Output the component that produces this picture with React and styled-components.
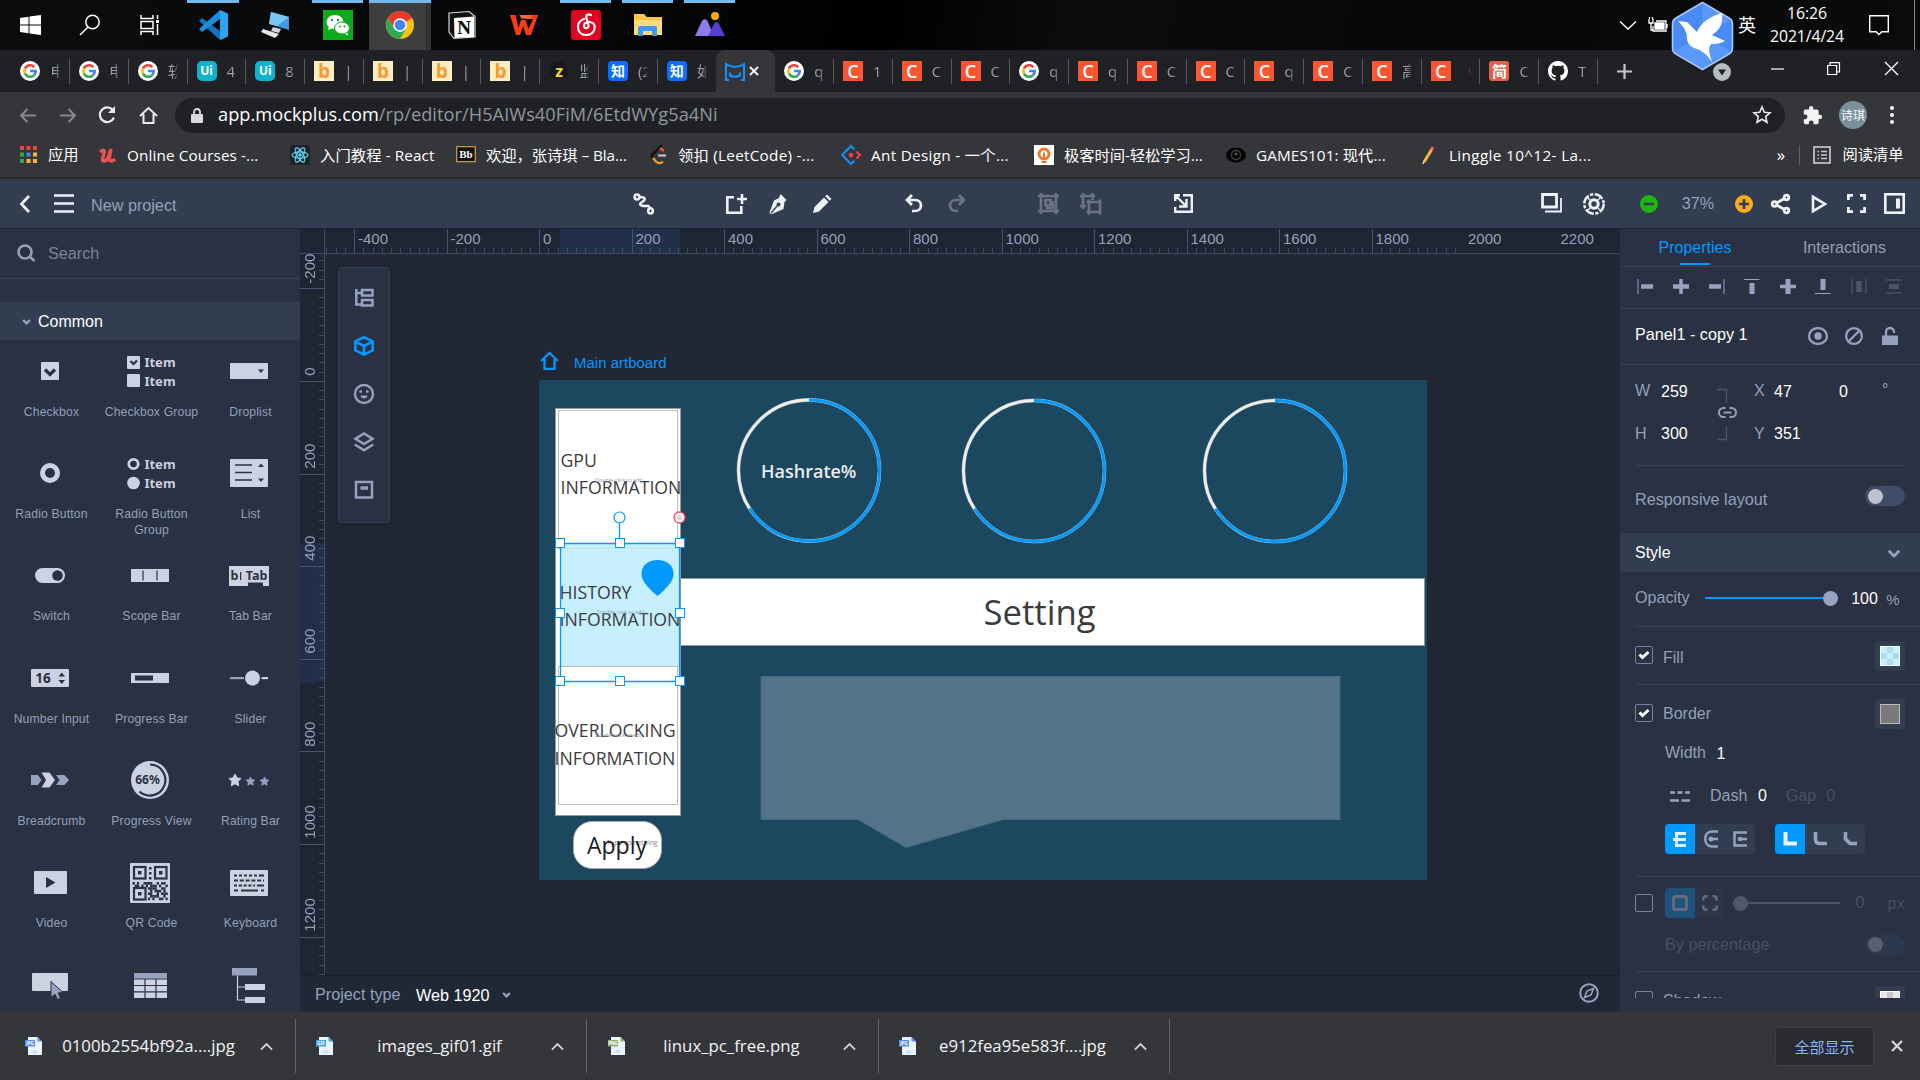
import React from "react";
import styled, { createGlobalStyle, css } from "styled-components";

const UI = '"Open Sans", "Noto Sans CJK SC", sans-serif';
const ARIAL = '"Liberation Sans", "Noto Sans CJK SC", sans-serif';

const C = {
  panel: "#293142",
  panelHi: "#323d50",
  line: "#35435a",
  canvas: "#222734",
  ruler: "#1e2533",
  mute: "#94a0ba",
  light: "#ccd2e1",
  mid: "#97a2c0",
  blue: "#0099ff",
  board: "#1b475f",
};

const Global = createGlobalStyle`
  html, body { margin: 0; padding: 0; background: #222734; }
  *, *::before, *::after { box-sizing: border-box; }
  svg { display: block; flex: none; overflow: visible; }
`;

const Screen = styled.div`
  position: relative;
  width: 1920px;
  height: 1080px;
  overflow: hidden;
  display: flex;
  flex-direction: column;
  font-family: ${UI};
`;

const Slot = styled.div`
  flex: none;
  width: ${(p) => p.$w || 24}px;
  margin-left: ${(p) => p.$ml || 0}px;
  margin-top: ${(p) => p.$mt || 0}px;
  margin-bottom: ${(p) => p.$mb || 0}px;
  display: flex;
  align-items: center;
  justify-content: ${(p) => p.$j || "center"};
  color: ${(p) => p.$c || "inherit"};
  opacity: ${(p) => (p.$dim ? 0.3 : 1)};
`;

const Txt = styled.span`
  white-space: nowrap;
  font-size: ${(p) => p.$s || 15}px;
  letter-spacing: ${(p) => p.$ls || 0}px;
  color: ${(p) => p.$c || "inherit"};
  line-height: 1;
`;

const Ico = ({ w = 24, h, vb, sw = 2, children, fill = "none", stroke = "currentColor" }) => (
  <svg width={w} height={h || w} viewBox={vb || `0 0 ${w} ${h || w}`} fill={fill} stroke={stroke} strokeWidth={sw}>
    {children}
  </svg>
);

/* ---------- Windows task bar ---------- */

const TaskBar = styled.div`
  height: 50px;
  flex: none;
  display: flex;
  align-items: stretch;
  color: #fff;
  background: linear-gradient(100deg, #0b0c0e 0%, #060708 30%, #000 46%, #0b0c0d 56%, #060707 75%, #0a0b0c 100%);
`;
const TaskCell = styled.div`
  position: relative;
  flex: none;
  width: ${(p) => p.$w || 62}px;
  display: flex;
  align-items: center;
  justify-content: center;
  background: ${(p) => (p.$active ? "linear-gradient(90deg, #3d3e40 92%, #26272a 93%, #333436 94%)" : "none")};
  ${(p) =>
    p.$bar &&
    css`
      &::before {
        content: "";
        position: absolute;
        top: 0;
        left: ${p.$active ? 0 : 5}px;
        right: ${p.$active ? 0 : 6}px;
        height: 3px;
        background: #76b9ed;
      }
    `}
`;
const TaskTray = styled.div`
  margin-left: auto;
  display: flex;
  align-items: stretch;
`;
const Clock = styled.div`
  width: 90px;
  margin-left: 3px;
  text-align: center;
  font-size: 15.8px;
  line-height: 23px;
  padding-top: 2px;
  letter-spacing: -0.1px;
`;
const TrayEdge = styled.div`
  width: 1px;
  margin: 0 5px 0 23px;
  background: #8a8a8a;
`;
const BirdBadge = styled.div`
  position: absolute;
  left: 1671px;
  top: 1px;
`;

const Windows = () => (
  <Ico w={21} h={20} vb="0 0 21 20" fill="#fff" stroke="none">
    <path d="M0 3l8.5-1.2v7.7H0zM9.5 1.6L21 0v9.5H9.5zM0 10.5h8.5v7.7L0 17zM9.5 10.5H21V20L9.5 18.4z" />
  </Ico>
);
const SearchGlyph = () => (
  <Ico w={22} sw={1.5}>
    <circle cx="13.5" cy="8" r="6.7" />
    <path d="M9 13L1 21" />
  </Ico>
);
const TaskView = () => (
  <Ico w={22} h={20} sw={1.5}>
    <path d="M2 0v3.5h12V0M2 20v-3.5h12V20M2 6.500h12v7H2zM18.500 0v4M18.500 9v11" />
    <path d="M17 6.500h3" strokeWidth="3" />
  </Ico>
);
const VsCode = () => (
  <Ico w={30} stroke="none">
    <path d="M22 30L1 11l3-3 18 13z" fill="#1473bd" />
    <path d="M22 0L1 19l3 3 18-13z" fill="#1b8edb" />
    <path d="M22 0l8 3.500v23L22 30z" fill="#2aa5ee" />
  </Ico>
);
const RemotePc = () => (
  <Ico w={30} h={26} stroke="none">
    <path d="M10 0l18 5v13L8 12z" fill="#3c9be0" />
    <path d="M10 0l18 5-12 9-8-2z" fill="#7cc6f4" />
    <path d="M12 15l8 2-2 4-8-2z" fill="#cfd4d8" />
    <path d="M2 17l16 5-4 4L0 20z" fill="#e6e9eb" />
  </Ico>
);
const WeChat = () => (
  <Ico w={30} stroke="none">
    <rect width="30" height="30" fill="#0cab1c" />
    <ellipse cx="12" cy="12" rx="8.5" ry="7" fill="#fff" />
    <path d="M6 16l-1 4 5-2zM24 22l1 3.500-4-2z" fill="#fff" />
    <ellipse cx="19" cy="18" rx="7.500" ry="6" fill="#fff" stroke="#0cab1c" strokeWidth="1" />
    <g fill="#0cab1c">
      <circle cx="9" cy="10" r="1.200" /><circle cx="15" cy="10" r="1.200" />
      <circle cx="17" cy="16.500" r="1" /><circle cx="21.500" cy="16.500" r="1" />
    </g>
  </Ico>
);
const Chrome = () => (
  <Ico w={28} stroke="none">
    <circle cx="14" cy="14" r="14" fill="#fbc116" />
    <path d="M14 14L1.900 7A14 14 0 0 1 26.100 7z" fill="#e33b2e" />
    <path d="M14 7h12.100A14 14 0 0 0 1.900 7L8 17z" fill="#e33b2e" />
    <path d="M1.900 7A14 14 0 0 0 14 28l6-10.500-6 3.500-6-3.500z" fill="#2da94f" />
    <circle cx="14" cy="14" r="6.800" fill="#fff" />
    <circle cx="14" cy="14" r="5.300" fill="#4285f4" />
  </Ico>
);
const GlyphText = styled.text`
  font-family: ${(p) => p.$f || '"Noto Sans"'};
  font-size: ${(p) => p.$s}px;
  font-weight: ${(p) => p.$b || 700};
  text-anchor: middle;
`;
const Notion = () => (
  <Ico w={28} stroke="none">
    <path d="M1 2L21 0.500l6 5V26L6 27.500 1 21z" fill="#111" stroke="#d8d8d8" strokeWidth="1.200" />
    <path d="M6 7l20-1.500V26L6.500 27z" fill="#fff" />
    <GlyphText $f='"Liberation Serif"' $s={19} x="16" y="23" fill="#000">N</GlyphText>
  </Ico>
);
const Wps = () => (
  <Ico w={28} h={20} stroke="none" fill="#ff3b14">
    <path d="M0 0h5.500l3 13 2.500-8h4.500l3 9L23 4h-8l1-4h12l-7 20h-5l-3-9-3 9H6z" />
    <path d="M10 0h12l-1.500 3.500H11z" fill="#ff6a3c" />
  </Ico>
);
const NetEase = () => (
  <Ico w={30}>
    <rect width="30" height="30" rx="3" fill="#e60020" stroke="none" />
    <path
      d="M20 5c-3-1.500-5.500 0-4.500 3l2 7.500c.7 3-4.500 4-4.500.5 0-3 3-4 5.500-4 4 0 6 3.500 5 7-1 4-4.500 6-8.500 6C10 25 7 21.500 7 17c0-4.500 3-7 6-8"
      stroke="#fff" strokeWidth="2.200" strokeLinecap="round"
    />
  </Ico>
);
const Folder = () => (
  <Ico w={28} h={24} stroke="none">
    <path d="M0 1h10l3 3h15v18H0z" fill="#f7c64a" />
    <path d="M0 7h28v15H0z" fill="#ffdc78" />
    <path d="M4 23v-8a2 2 0 0 1 2-2h15a2 2 0 0 1 2 2v8h-5v-5H9v5z" fill="#3f9be4" />
  </Ico>
);
const Peaks = () => (
  <Ico w={30} h={22} stroke="none">
    <path d="M0 22L7 7c1.500-2.500 4-2.500 5.500 0L19 22z" fill="#8e7cf0" />
    <path d="M13 22l6-12c1.500-2.500 3.500-2.500 5 0l6 12z" fill="#5a3fd6" />
    <circle cx="20" cy="2" r="4" fill="#ffb000" />
  </Ico>
);
const Bird = () => (
  <Ico w={63} h={70} stroke="none">
    <path d="M31.500 1.500L58 17q3.500 2 3.500 6v24q0 4-3.500 6L31.500 68.500 5 53q-3.500-2-3.500-6V23q0-4 3.500-6z" fill="#4a8af4" stroke="#a6c8ff" strokeWidth="1.600" />
    <path d="M31.500 3L60 19 31.500 35z" fill="#69a2ff" opacity=".6" />
    <path d="M3 50L31.500 35 60 50 31.500 67z" fill="#5b98fb" />
    <path d="M7 20l9 1 10 10C29 22 40 15 51 12c1 8-1 14-5 18l-5 4 13 6c-5 3-10 3-14 3-3 4-2 8 1 18-5-7-9-11-15-13-8-2-11-8-10-13-1-6-5-11-9-15z" fill="#fff" />
  </Ico>
);

/* ---------- Browser chrome ---------- */

const TabStrip = styled.div`
  height: 42px;
  flex: none;
  display: flex;
  align-items: stretch;
  padding-left: 11.3px;
  background: #202124;
  color: #9aa0a6;
`;
const Tab = styled.div`
  flex: none;
  width: 58.77px;
  display: flex;
  align-items: center;
  padding-left: 9px;
  gap: 10px;
  background: linear-gradient(#55575b, #55575b) right 9px / 1px 25px no-repeat;
  ${(p) =>
    p.$bare &&
    css`
      background: none;
    `}
`;
const ActiveTab = styled(Tab)`
  background: #35363a;
  border-radius: 9px 9px 0 0;
  gap: 3px;
  color: #fff;
`;
const TabLabel = styled.div`
  width: 10px;
  overflow: hidden;
  white-space: nowrap;
  font-size: 15px;
  line-height: 22px;
  mask-image: linear-gradient(90deg, #000 60%, transparent);
`;
const Favicon = styled.div`
  flex: none;
  width: 20px;
  height: 20px;
  border-radius: ${(p) => p.$r || 0}px;
  background: ${(p) => p.$bg || "none"};
  color: ${(p) => p.$c || "#fff"};
  display: flex;
  align-items: center;
  justify-content: center;
  font-size: ${(p) => p.$s || 15}px;
  font-weight: ${(p) => p.$b || 700};
  line-height: 1;
`;
const Google = () => (
  <Ico w={20} stroke="none">
    <circle cx="10" cy="10" r="10" fill="#fff" />
    <g fill="none" strokeWidth="2.600">
      <path d="M14.300 6.200A5.700 5.700 0 0 0 5 7.300" stroke="#ea4335" />
      <path d="M5 7.300a5.700 5.700 0 0 0 0 5.400" stroke="#fbbc05" />
      <path d="M5 12.700a5.700 5.700 0 0 0 8.800 1.700" stroke="#34a853" />
      <path d="M13.800 14.400A5.700 5.700 0 0 0 15.700 10H10" stroke="#4285f4" />
    </g>
  </Ico>
);
const favs = {
  g: <Google />,
  u: <Favicon $bg="#10b3cf" $r={5} $s={12}>Ui</Favicon>,
  b: <Favicon $bg="#fdeec2" $c="#f79a35" $s={19}>b</Favicon>,
  z: <Favicon $bg="radial-gradient(#17181b 55%, transparent 75%)" $c="#ffd91a" $s={16}>z</Favicon>,
  zh: <Favicon $bg="#0b6dff" $r={4} $s={14}>知</Favicon>,
  c: <Favicon $bg="#fc5531" $s={18} $b={600}>C</Favicon>,
  j: <Favicon $bg="#e2604b" $r={3} $s={15}>简</Favicon>,
  gh: (
    <Ico w={20} vb="0 0 16 16" fill="#fff" stroke="none">
      <path d="M8 0C3.580 0 0 3.580 0 8c0 3.540 2.290 6.530 5.470 7.590.4.070.55-.17.55-.38v-1.330c-2.230.48-2.700-1.070-2.700-1.070-.36-.92-.89-1.170-.89-1.170-.73-.5.050-.49.050-.49.8.060 1.230.83 1.230.83.72 1.220 1.870.87 2.330.66.070-.52.28-.87.510-1.070-1.780-.2-3.640-.89-3.640-3.950 0-.87.31-1.590.82-2.150-.08-.2-.36-1.020.08-2.120 0 0 .67-.21 2.200.82a7.600 7.600 0 0 1 4 0c1.530-1.040 2.200-.82 2.200-.82.44 1.100.16 1.920.08 2.120.51.56.82 1.270.82 2.150 0 3.070-1.870 3.750-3.650 3.950.29.25.54.73.54 1.480v2.200c0 .21.15.46.55.38A8 8 0 0 0 16 8c0-4.420-3.580-8-8-8z" />
    </Ico>
  ),
};
const tabsLeft = [
  ["g", "电"], ["g", "电"], ["g", "软"], ["u", "4"], ["u", "8"], ["b", " |"], ["b", " |"], ["b", " |"], ["b", " |"],
  ["z", "监"], ["zh", "(2"], ["zh", "如"],
];
const tabsRight = [
  ["g", "q"], ["c", "1"], ["c", "C"], ["c", "C"], ["g", "q"], ["c", "q"], ["c", "C"], ["c", "C"], ["c", "q"], ["c", "C"],
  ["c", "高"], ["c", "《"], ["j", "C"], ["gh", "T"],
];

const AddressRow = styled.div`
  height: 46px;
  flex: none;
  display: flex;
  align-items: center;
  background: #35363a;
  color: #e8eaed;
`;
const UrlPill = styled.div`
  width: 1610px;
  height: 35px;
  margin-left: 15px;
  border-radius: 18px;
  background: #202124;
  display: flex;
  align-items: center;
  padding: 0 11px 0 10px;
`;
const Url = styled.div`
  margin-left: 9px;
  padding-bottom: 2px;
  flex: 1;
  white-space: nowrap;
  color: #93979c;
  font-size: 18.2px;
  letter-spacing: ${(p) => p.$ls || 0.05}px;
  b { color: #fff; font-weight: 400; }
`;
const Avatar = styled.div`
  width: 28px;
  height: 28px;
  margin-left: 15px;
  border-radius: 50%;
  background: #78909c;
  color: #fff;
  font-size: 12px;
  display: flex;
  align-items: center;
  justify-content: center;
`;

const BookmarkRow = styled.div`
  height: 41px;
  flex: none;
  display: flex;
  align-items: center;
  padding-bottom: 6px;
  background: #35363a;
  border-bottom: 2px solid #292929;
  color: #fff;
`;
const Mark = styled.div`
  flex: none;
  display: flex;
  align-items: center;
  width: ${(p) => p.$w}px;
  gap: ${(p) => p.$g || 10}px;
  white-space: nowrap;
  font-size: 15.3px;
  line-height: 22px;
  letter-spacing: ${(p) => p.$ls ?? 0.1}px;
`;
const MarkSep = styled.div`
  width: 1px;
  height: 20px;
  background: #5f6368;
`;

/* ---------- Editor header ---------- */

const EditorHeader = styled.div`
  height: 50px;
  flex: none;
  display: flex;
  align-items: center;
  padding-left: 14px;
  background: ${C.panelHi};
  border-bottom: 1px solid #1d2430;
  color: #eef1f6;
  font-family: ${ARIAL};
`;
const ZoomDot = styled.div`
  width: 18px;
  height: 18px;
  border-radius: 50%;
  background: ${(p) => p.$bg};
  color: #323d50;
  display: flex;
  align-items: center;
  justify-content: center;
`;

/* ---------- Editor body ---------- */

const Body = styled.div`
  flex: 1;
  min-height: 0;
  display: flex;
  font-family: ${ARIAL};
`;
const LeftPanel = styled.div`
  width: 300px;
  flex: none;
  overflow: hidden;
  background: ${C.panel};
`;
const SearchRow = styled.div`
  height: 50px;
  display: flex;
  align-items: center;
  padding: 0 0 1px 17px;
  gap: 13px;
  border-bottom: 1px solid ${C.line};
  color: #78849c;
`;
const GroupHead = styled.div`
  height: 38px;
  margin-top: 23px;
  display: flex;
  align-items: center;
  gap: 8px;
  padding: 1px 0 0 22px;
  background: ${C.panelHi};
  color: #fff;
`;
const Palette = styled.div`
  display: grid;
  grid-template-columns: repeat(3, 100px);
  grid-auto-rows: 102.35px;
`;
const PaletteItem = styled.div`
  display: flex;
  flex-direction: column;
  align-items: center;
  &:nth-child(3n) { padding-right: 2px; }
`;
const PaletteArt = styled.div`
  height: 62px;
  flex: none;
  display: flex;
  align-items: center;
  justify-content: center;
`;
const PaletteLabel = styled.div`
  width: 96px;
  margin-left: 3px;
  margin-top: 1.6px;
  text-align: center;
  font-size: 12.2px;
  line-height: 16px;
  color: ${C.mute};
  letter-spacing: 0.15px;
`;

const L = C.light, D = C.panel, M = C.mid;
const itemText = (y) => <GlyphText $s={13} x="33" y={y} fill={L}>Item</GlyphText>;
const qrCells = [
  "1010011110010110", "0110101011101001",
  "0000000111100110", "0000000010111010", "0000000110010111", "0000000011110010", "0000000101001101",
];
const palette = [
  ["Checkbox", <Ico w={18} stroke="none"><rect width="18" height="18" rx="1" fill={L} /><path d="M4 7.500l5 5 5-5" stroke={D} strokeWidth="3.200" fill="none" /></Ico>],
  ["Checkbox Group", (
    <Ico w={46} h={32} stroke="none">
      <rect width="13" height="13" rx="1" y="1" fill={L} /><path d="M3.500 6l3 3 3.500-3.500" stroke={D} strokeWidth="2.200" fill="none" />
      <rect width="13" height="13" rx="1" y="19" fill={L} />{itemText(12)}{itemText(30.500)}
    </Ico>
  )],
  ["Droplist", <Ico w={38} h={16} stroke="none"><rect width="38" height="16" rx="1" fill={L} /><path d="M28 6.500h6l-3 3.500z" fill={D} /></Ico>],
  ["Radio Button", <Ico w={20} stroke={L} sw={5}><circle cx="10" cy="10" r="7.500" /></Ico>],
  ["Radio Button Group", (
    <Ico w={46} h={32} stroke="none">
      <circle cx="6.500" cy="7" r="4.700" fill="none" stroke={L} strokeWidth="2.800" /><circle cx="6.500" cy="26" r="6.300" fill={L} />
      {itemText(12)}{itemText(30.500)}
    </Ico>
  )],
  ["List", (
    <Ico w={38} h={28} stroke={D} sw={1.500}>
      <rect width="38" height="28" rx="1" fill={L} stroke="none" /><path d="M5 6h17M5 13.500h17M5 21h17" />
      <path d="M28 8h6l-3-3.500zM28 19.500h6l-3 3.500z" fill={D} stroke="none" />
    </Ico>
  )],
  ["Switch", <Ico w={30} h={15} stroke="none"><rect width="30" height="15" rx="7.500" fill={L} /><circle cx="22.500" cy="7.500" r="5.300" fill={D} /></Ico>],
  ["Scope Bar", <Ico w={38} h={13} stroke={D} sw={1.200}><rect width="38" height="13" fill={L} stroke="none" /><path d="M12 1.500v10M26 1.500v10" /></Ico>],
  ["Tab Bar", (
    <Ico w={40} h={20} stroke="none">
      <path d="M0 0h40v20h-6v-3.500H19V20H0z" fill={L} />
      <GlyphText $s={12.500} x="27.500" y="14" fill={D}>Tab</GlyphText><GlyphText $s={12.500} x="5.500" y="14" fill={D}>b</GlyphText>
      <rect x="11" y="6" width="1.200" height="8" fill={D} />
    </Ico>
  )],
  ["Number Input", (
    <Ico w={38} h={18} stroke="none">
      <rect width="38" height="18" rx="1" fill={L} /><GlyphText $s={13.500} x="12" y="14" fill={D}>16</GlyphText>
      <path d="M27.500 7.500h6.500l-3.200-4zM27.500 11h6.500l-3.200 4z" fill={D} />
    </Ico>
  )],
  ["Progress Bar", <Ico w={38} h={10} stroke="none"><rect width="38" height="10" fill={L} /><rect x="4" y="2.500" width="18" height="5" fill={D} /></Ico>],
  ["Slider", (
    <Ico w={38} h={16} stroke="none">
      <rect y="7" width="14" height="2.200" fill={M} /><circle cx="22.500" cy="8" r="7.500" fill={L} /><rect x="31.500" y="7" width="6.500" height="2.200" fill={L} />
    </Ico>
  )],
  ["Breadcrumb", (
    <Ico w={38} h={16} stroke="none">
      <path d="M0 3h7l3.500 5L7 13H0z" fill={M} /><path d="M10.500 0.500h8L24 8l-5.500 7.500h-8L15 8z" fill={L} /><path d="M25 3h8.500L38 8l-4.500 5H25l3.500-5z" fill={M} />
    </Ico>
  )],
  ["Progress View", (
    <Ico w={38} stroke="none">
      <circle cx="19" cy="19" r="19" fill={L} /><path d="M19 3.500a15.500 15.500 0 1 1-10.500 27" fill="none" stroke={D} strokeWidth="2.200" />
      <GlyphText $s={12} x="16.500" y="23" fill={D}>66%</GlyphText>
    </Ico>
  )],
  ["Rating Bar", (
    <Ico w={40} h={14} stroke="none">
      <path d="M6 1l1.900 3.900 4.100.6-3 3 .7 4.300L6 10.700l-3.700 2.100.7-4.300-3-3 4.100-.6z" fill={L} stroke={L} strokeWidth="1" />
      <path d="M21.500 4l1.300 2.700 3 .4-2.200 2.100.5 3-2.600-1.400-2.700 1.400.5-3-2.200-2.100 3-.4zM35.500 4l1.300 2.700 3 .4-2.200 2.100.5 3-2.600-1.400-2.700 1.400.5-3-2.200-2.100 3-.4z" fill={M} stroke={M} strokeWidth=".8" />
    </Ico>
  )],
  ["Video", <Ico w={33} h={23} stroke="none"><rect width="33" height="23" rx="1" fill={L} /><path d="M12 6v11l9.500-5.500z" fill={D} /></Ico>],
  ["QR Code", (
    <Ico w={40} stroke="none">
      <rect width="40" height="40" rx="1" fill={L} />
      {[[3, 3], [24, 3], [3, 24]].map(([x, y]) => (
        <g key={`${x}-${y}`}>
          <rect x={x + 1} y={y + 1} width="11.500" height="11.500" fill="none" stroke={D} strokeWidth="2.200" />
          <rect x={x + 5} y={y + 5} width="3.500" height="3.500" fill={D} />
        </g>
      ))}
      {[4, 9, 14].map((y) => <rect key={y} x="19" y={y} width="2.500" height="2.500" fill={D} />)}
      {qrCells.map((row, r) =>
        [...row].map((v, i) => v === "1" && <rect key={`${r}-${i}`} x={2.500 + i * 2.200} y={19 + r * 2.600} width="2.300" height="2.600" fill={D} />)
      )}
    </Ico>
  )],
  ["Keyboard", (
    <Ico w={38} h={26} stroke={D} sw={2}>
      <rect width="38" height="26" rx="1" fill={L} stroke="none" />
      <path d="M4 5.500h26" strokeDasharray="3 2" /><path d="M29 5.500h5" /><path d="M4 10.500h30" strokeDasharray="4 1.800" /><path d="M4 15.500h21" strokeDasharray="3 1.800" /><path d="M27 15.500h7M4 20.500h4M11 20.500h17M31 20.500h3" />
    </Ico>
  )],
  ["Button", (
    <Ico w={36} h={26} stroke="none">
      <rect width="36" height="18" y="1" rx="1" fill={L} />
      <path d="M19 9.500v16l4-3.300 2.500 5.300 3-1.500-2.500-5 5-.5z" fill={M} stroke={D} strokeWidth="1" />
    </Ico>
  )],
  ["Table", (
    <Ico w={33} h={25} stroke={D} sw={1.200}>
      <rect width="33" height="25" fill={L} stroke="none" /><rect width="33" height="5.500" fill={M} stroke="none" />
      <path d="M0 6h33M0 12.500h33M0 18.800h33M11 6v19M22 6v19" />
    </Ico>
  )],
  ["Tree", (
    <Ico w={34} h={35} stroke={L} sw={1.200}>
      <rect x="0" y="0" width="25" height="7.500" fill={M} stroke="none" /><path d="M5.500 7.500v24.500H14M5.500 19H14" />
      <rect x="13" y="16" width="20" height="6" fill={L} stroke="none" /><rect x="13" y="29" width="20" height="6" fill={L} stroke="none" />
    </Ico>
  )],
];

const Workspace = styled.div`
  width: 1320px;
  flex: none;
  display: flex;
  flex-direction: column;
`;
const TopRuler = styled.div`
  position: relative;
  height: 25px;
  flex: none;
  display: flex;
  padding-left: 54px;
  overflow: hidden;
  background: linear-gradient(90deg, transparent 260px, #212f49 260px, #212f49 380px, transparent 380px), ${C.ruler};
  border-bottom: 1px solid #3d4c66;
`;
const RulerLabel = styled.div`
  width: 92.5px;
  flex: none;
  padding: 3px 0 0 4px;
  font-size: 15px;
  line-height: 14px;
  color: #96a1b8;
`;
const SideRuler = styled.div`
  position: relative;
  width: 25px;
  flex: none;
  overflow: hidden;
  background: linear-gradient(180deg, transparent 289px, #212f49 289px, #212f49 428px, transparent 428px), ${C.ruler};
  border-right: 1px solid #3d4c66;
`;
const SideLabel = styled.div`
  height: 92.65px;
  margin-top: ${(p) => p.$mt || 0}px;
  padding: 0 0 5px 4px;
  writing-mode: vertical-rl;
  transform: rotate(180deg);
  width: 24px;
  text-align: left;
  display: flex;
  align-items: center;
  font-size: 15px;
  line-height: 14px;
  color: #96a1b8;
`;
const RulerTicks = styled.svg`
  position: absolute;
  inset: 0;
`;
const Middle = styled.div`
  flex: 1;
  min-height: 0;
  display: flex;
`;
const Canvas = styled.div`
  position: relative;
  flex: 1;
  overflow: hidden;
  background: ${C.canvas};
`;
const ToolBox = styled.div`
  position: absolute;
  left: 13px;
  top: 13px;
  width: 52px;
  height: 256px;
  border: 1px solid #354156;
  border-radius: 4px;
  background: ${C.panel};
  color: ${C.mid};
  display: flex;
  flex-direction: column;
  align-items: center;
  padding-top: 19.5px;
  gap: 28.2px;
  box-shadow: 0 0 6px rgba(0, 0, 0, 0.15);
`;
const BoardTitle = styled.div`
  position: absolute;
  left: 216px;
  top: 98px;
  display: flex;
  gap: 16px;
  align-items: center;
  color: ${C.blue};
`;
const Board = styled.div`
  position: absolute;
  left: 214px;
  top: 126px;
  width: 888px;
  height: 500px;
  background: ${C.board};
  font-family: ${UI};
`;
const Shape = styled.div`
  position: absolute;
  left: ${(p) => p.$x}px;
  top: ${(p) => p.$y}px;
  width: ${(p) => p.$w}px;
  height: ${(p) => p.$h}px;
  background: ${(p) => p.$bg || "none"};
  border: ${(p) => p.$bd || "none"};
  border-radius: ${(p) => p.$r || 0}px;
`;
const BoardText = styled.div`
  position: absolute;
  left: ${(p) => p.$x}px;
  top: ${(p) => p.$y}px;
  white-space: pre;
  font-size: ${(p) => p.$s}px;
  font-weight: ${(p) => p.$b || 400};
  line-height: ${(p) => p.$lh || 1}px;
  letter-spacing: ${(p) => p.$ls || 0}px;
  color: ${(p) => p.$c || "#3c3c3c"};
`;
const Overlay = styled.svg`
  position: absolute;
  left: 0;
  top: 0;
`;
const StatusBar = styled.div`
  height: 37px;
  flex: none;
  display: flex;
  align-items: center;
  padding: 1px 0 0 15px;
  background: #202836;
  border-top: 1px solid #1a202b;
`;

/* ---------- Properties panel ---------- */

const RightPanel = styled.div`
  width: 300px;
  flex: none;
  background: ${C.panel};
  color: ${C.mute};
  overflow: hidden;
`;
const PanelScroll = styled.div`
  height: 769px;
  overflow: hidden;
`;
const PanelTabs = styled.div`
  height: 38px;
  display: flex;
  align-items: center;
  border-bottom: 1px solid ${C.line};
`;
const PanelTab = styled.div`
  height: 37px;
  width: 150px;
  flex: none;
  display: flex;
  align-items: center;
  justify-content: center;
  color: ${(p) => (p.$on ? C.blue : C.mute)};
  background: ${(p) => (p.$on ? `linear-gradient(${C.blue}, ${C.blue}) 60px 34px / 30px 2px no-repeat` : "none")};
`;
const Line = styled.div`
  height: ${(p) => p.$h}px;
  display: flex;
  align-items: center;
  padding: ${(p) => p.$pt || 0}px ${(p) => (p.$full ? 0 : 15)}px ${(p) => p.$pb || 0}px 15px;
  ${(p) => p.$border && css`border-bottom: 1px solid ${C.line};`}
`;
const Rule = styled.div`
  height: 1px;
  margin: 0 ${(p) => p.$r || 0}px 0 15px;
  background: ${C.line};
`;
const Grow = styled.div`
  flex: 1;
`;
const SectionHead = styled(Line)`
  background: ${C.panelHi};
  color: #fff;
`;
const Toggle = styled.div`
  width: 40px;
  height: 20px;
  border-radius: 10px;
  padding: 2.5px 3px;
  background: ${(p) => (p.$dim ? "#2e384d" : "#3f4d67")};
  margin-top: ${(p) => p.$mt || 0}px;
  &::before {
    content: "";
    display: block;
    width: 15px;
    height: 15px;
    border-radius: 50%;
    background: ${(p) => (p.$dim ? "#585f70" : "#c0c3cf")};
  }
`;
const Range = styled.div`
  width: 133px;
  height: 2px;
  margin-left: 15px;
  background: ${C.blue};
  display: flex;
  align-items: center;
  justify-content: flex-end;
`;
const RangeOff = styled(Range)`
  width: 107px;
  margin-left: 6px;
  background: #4b546a;
  justify-content: flex-start;
`;
const Knob = styled.div`
  width: 15px;
  height: 15px;
  border-radius: 50%;
  background: ${(p) => (p.$dim ? "#4f576c" : "#98a3c0")};
`;
const Box = styled.div`
  width: 18px;
  height: 18px;
  flex: none;
  border: 1px solid #7784a0;
  border-radius: 2px;
  margin-right: 10px;
  margin-top: -1px;
  display: flex;
  align-items: center;
  justify-content: center;
`;
const Swatch = styled.div`
  width: 30px;
  height: 30px;
  border-radius: 3px;
  background: ${C.panelHi};
  padding: 5px;
  &::before {
    content: "";
    display: block;
    width: 20px;
    height: 20px;
    background: ${(p) => p.$bg};
    border: 1px solid ${(p) => p.$bd || "#fff"};
  }
`;
const Segments = styled.div`
  display: flex;
  border-radius: 4px;
  overflow: hidden;
  background: ${(p) => (p.$dim ? "#2c3446" : C.panelHi)};
`;
const Segment = styled.div`
  width: 30px;
  height: 30px;
  display: flex;
  align-items: center;
  justify-content: center;
  background: ${(p) => (p.$on ? (p.$dim ? "#1d527b" : C.blue) : "none")};
  color: ${(p) => (p.$dim ? "#636b7e" : p.$on ? "#e6f2ff" : C.mid)};
`;
const Check = () => (
  <Ico w={12} stroke="#fff" sw={3}><path d="M1.500 5.500l3 3L10.500 3" /></Ico>
);

/* ---------- Download shelf ---------- */

const Shelf = styled.div`
  height: 68px;
  flex: none;
  display: flex;
  align-items: center;
  background: #35363a;
  color: #f1f3f4;
`;
const ShelfItem = styled.div`
  width: ${(p) => p.$w}px;
  height: 54px;
  flex: none;
  padding-left: ${(p) => p.$pl}px;
  display: flex;
  align-items: center;
  border-right: 1px solid #64666a;
`;
const ShelfName = styled.div`
  width: 203px;
  padding-left: 10px;
  text-align: center;
  white-space: nowrap;
  font-size: 16.8px;
  line-height: 22px;
  letter-spacing: ${(p) => p.$ls || 0}px;
`;
const ShowAll = styled.div`
  width: 99px;
  height: 39px;
  margin-left: auto;
  border: 1px solid #3c4043;
  border-radius: 4px;
  background: #292a2d;
  color: #8ab4f8;
  font-size: 15px;
  display: flex;
  align-items: center;
  justify-content: center;
`;
const FileIcon = ({ c, t }) => (
  <Ico w={17} h={18} stroke="none">
    <path d="M3 0h9.500L17 4.500V18H3z" fill="#e8f4ff" />
    <path d="M12.500 0L17 4.500h-4.500z" fill={c} />
    <path d="M6 16l4-4 3 4z" fill="#c9e2f5" />
    <rect y="3" width="10" height="6.500" fill={c} />
    <GlyphText $s={4.500} x="5" y="8" fill="#fff">{t}</GlyphText>
  </Ico>
);
const Chevron = ({ w = 12, sw = 2, up }) => (
  <Ico w={w} h={w} vb="0 0 12 12" sw={sw}><path d={up ? "M1.500 8.500L6 4l4.500 4.500" : "M1.500 4L6 8.500 10.500 4"} /></Ico>
);

/* ---------- Data ---------- */

const hTicks = [];
for (let i = -3; i < 120; i++) hTicks.push({ p: 54 + i * 9.25, major: i % 10 === 0 });
const vTicks = [];
for (let i = -4; i < 76; i++) vTicks.push({ p: 34.2 + i * 9.265, major: i % 10 === 0 });
const hLabels = Array.from({ length: 14 }, (_, i) => String(-400 + i * 200));
const vLabels = Array.from({ length: 8 }, (_, i) => String(-200 + i * 200));
const gauges = [[270, 90.5], [495, 91], [736, 91]];
const handles = [[21, 163], [81, 163], [141, 163], [21, 233], [141, 233], [21, 301], [81, 301], [141, 301]];

export default function App() {
  return (
    <Screen>
      <Global />
      <TaskBar>
        <TaskCell $w={61}><Windows /></TaskCell>
        <TaskCell $w={58}><SearchGlyph /></TaskCell>
        <TaskCell $w={62.5}><TaskView /></TaskCell>
        <TaskCell $bar $w={63}><VsCode /></TaskCell>
        <TaskCell><RemotePc /></TaskCell>
        <TaskCell $bar><WeChat /></TaskCell>
        <TaskCell $bar $active><Chrome /></TaskCell>
        <TaskCell><Notion /></TaskCell>
        <TaskCell><Wps /></TaskCell>
        <TaskCell $bar><NetEase /></TaskCell>
        <TaskCell $bar><Folder /></TaskCell>
        <TaskCell $bar><Peaks /></TaskCell>
        <TaskTray>
          <Slot><Ico w={16} h={9} sw={1.4}><path d="M0 .5l8 7.500 8-7.500" /></Ico></Slot>
          <Slot $ml={6}>
            <Ico w={20} h={14} sw={1.3}>
              <path d="M5 8v5h13V3H8M19 6v4" /><path d="M7 5h9v6H7z" fill="#fff" />
              <path d="M1 1v4h4V1M3 5v7h2M1.500-1v2M4.500-1v2" />
            </Ico>
          </Slot>
          <Slot $ml={65}><Txt $s={18}>英</Txt></Slot>
          <Clock>16:26<br />2021/4/24</Clock>
          <Slot $ml={15}>
            <Ico w={20} h={20} sw={1.4}><path d="M.7.700h18.600v16h-6.500l-2.800 2.800-2.800-2.800H.7z" /></Ico>
          </Slot>
          <TrayEdge />
        </TaskTray>
      </TaskBar>

      <TabStrip>
        {tabsLeft.map(([f, t], i) => (
          <Tab key={i} $bare={i === 11}>{favs[f]}<TabLabel>{t}</TabLabel></Tab>
        ))}
        <ActiveTab>
          <Ico w={20} h={17} stroke="#1292ff" sw={2}>
            <path d="M4 17H1V1c3 2 6 3 9 3s6-1 9-3v16h-3M5 9.500v3c3 1.500 7 1.500 10 0v-3" />
          </Ico>
          <Ico w={12} sw={1.800}><path d="M2 2l8 8M10 2l-8 8" /></Ico>
        </ActiveTab>
        {tabsRight.map(([f, t], i) => (
          <Tab key={i}>{favs[f]}<TabLabel>{t}</TabLabel></Tab>
        ))}
        <Slot $ml={15} $c="#c4c7cb"><Ico w={15} sw={2.200}><path d="M7.500 0v15M0 7.500h15" /></Ico></Slot>
        <Slot $ml={73}>
          <Ico w={18} stroke="none"><circle cx="9" cy="10" r="9" fill="#b9bcc1" /><path d="M5 7.500h8l-4 6z" fill="#202124" /></Ico>
        </Slot>
        <Slot $ml={32} $c="#fff"><Ico w={13} h={10} sw={1.200}><path d="M0 3h13" /></Ico></Slot>
        <Slot $ml={32} $c="#fff"><Ico w={13} h={18} sw={1.200}><path d="M.6 3.500h9v9h-9zM3 3.500V.6h9.500V10H9.600" /></Ico></Slot>
        <Slot $ml={34} $c="#fff"><Ico w={13} h={18} sw={1.300}><path d="M0 0l13 13M13 0L0 13" /></Ico></Slot>
      </TabStrip>

      <AddressRow>
        <Slot $ml={15} $c="#85878b"><Ico w={17} h={15}><path d="M17 7.500H1.500M8.500 1L2 7.500 8.500 14" /></Ico></Slot>
        <Slot $ml={17} $c="#85878b"><Ico w={17} h={15}><path d="M0 7.500h15.500M8.500 1L15 7.500 8.500 14" /></Ico></Slot>
        <Slot $ml={15}><Ico w={18} sw={2.200}><path d="M15.500 5A7.300 7.300 0 1 0 16 11.500" /><path d="M17 0v7h-7z" fill="currentColor" stroke="none" /></Ico></Slot>
        <Slot $ml={17}><Ico w={17}><path d="M0 9l8.500-8L17 9M3.500 7v9h10V7" /></Ico></Slot>
        <UrlPill>
          <Slot $c="#d8dadd"><Ico w={12} h={15} sw={1.800}><rect x="0" y="6" width="12" height="9" rx="1" fill="currentColor" stroke="none" /><path d="M3 7V4a3 3 0 0 1 6 0v3" /></Ico></Slot>
          <Url><b>app.mockplus.com</b>/rp/editor/H5AIWs40FiM/6EtdWYg5a4Ni</Url>
          <Slot>
            <Ico w={18} sw={1.600}><path d="M9 1l2.300 5.300 5.700.5-4.300 3.800 1.300 5.700L9 13.300l-5 3 1.300-5.700L1 6.800l5.700-.5z" /></Ico>
          </Slot>
        </UrlPill>
        <Slot $ml={15}>
          <Ico w={21} vb="0 0 24 24" fill="#f1f3f4" stroke="none">
            <path d="M20.500 11H19V7a2 2 0 0 0-2-2h-4V3.500a2.500 2.500 0 0 0-5 0V5H4a2 2 0 0 0-2 2v3.800h1.500a2.700 2.700 0 0 1 0 5.400H2V20a2 2 0 0 0 2 2h3.800v-1.500a2.700 2.700 0 0 1 5.400 0V22H17a2 2 0 0 0 2-2v-4h1.500a2.500 2.500 0 0 0 0-5z" />
          </Ico>
        </Slot>
        <Avatar>诗琪</Avatar>
        <Slot $ml={13}><Ico w={4} h={18} stroke="none" fill="#f1f3f4"><circle cx="2" cy="2" r="2" /><circle cx="2" cy="9" r="2" /><circle cx="2" cy="16" r="2" /></Ico></Slot>
      </AddressRow>

      <BookmarkRow>
        <Slot $w={17} $ml={20}>
          <Ico w={17} stroke="none">
            {["#e8453c", "#e8453c", "#e8453c", "#3aa757", "#4285f4", "#f9bb2d", "#3aa757", "#f9bb2d", "#f9bb2d"].map((c, i) => (
              <rect key={i} x={(i % 3) * 6.5} y={Math.floor(i / 3) * 6.5} width="4" height="4" fill={c} />
            ))}
          </Ico>
        </Slot>
        <Slot $w={50} $ml={11} $j="flex-start"><Txt $s={15.300}>应用</Txt></Slot>
        <Mark $w={192}>
          <Ico w={19} h={16} stroke="#ec5252" sw={3.400}><path d="M2 5c3-2 5-3 4 1-1 5-3 8 0 8 4 0 5-6 7-12-1 6-3 12 0 12 2 0 3-1 4-2" /></Ico>
          Online Courses -...
        </Mark>
        <Mark $w={166}>
          <Ico w={20} stroke="#61dafb" sw={1.100}>
            <rect width="20" height="20" rx="3" fill="#20232a" stroke="none" />
            <ellipse cx="10" cy="10" rx="8" ry="3.100" /><ellipse cx="10" cy="10" rx="8" ry="3.100" transform="rotate(60 10 10)" /><ellipse cx="10" cy="10" rx="8" ry="3.100" transform="rotate(120 10 10)" />
            <circle cx="10" cy="10" r="1.200" fill="#61dafb" />
          </Ico>
          入门教程 - React
        </Mark>
        <Mark $w={195} $ls={-0.05}>
          <Ico w={20} h={17} stroke="none"><rect x=".7" y=".7" width="18.600" height="15" fill="#111" stroke="#c9a24a" strokeWidth="1.200" /><GlyphText $f='"Liberation Serif"' $s={11} x="10" y="12" fill="#fff">Bb</GlyphText></Ico>
          欢迎，张诗琪 – Bla...
        </Mark>
        <Mark $w={190} $ls={0.25}>
          <Ico w={17} h={20} sw={2.400}><path d="M11 0L2 9c-1.500 1.500-1.500 3 0 4" stroke="#111" /><path d="M2 13l3 3.500c2 2 5 2 7 0" stroke="#f0a030" /><path d="M7 10.500h8" stroke="#b9b9b9" /><path d="M9 3l4 3" stroke="#e0533d" /></Ico>
          领扣 (LeetCode) -...
        </Mark>
        <Mark $w={193} $ls={0.3}>
          <Ico w={20}><path d="M13.500 4.500L10 1 1.200 10 10 19l3.500-3.500" stroke="#1d8cf8" /><path d="M15.500 6.500L19 10l-3.500 3.500" stroke="#f5434e" /><circle cx="10" cy="10" r="2.300" fill="#f5434e" stroke="none" /></Ico>
          Ant Design - 一个...
        </Mark>
        <Mark $w={192} $ls={-0.05}>
          <Ico w={20}><rect width="20" height="20" fill="#fff" stroke="none" /><circle cx="10" cy="9" r="5" stroke="#f0782a" strokeWidth="3" /><path d="M10 7.500v5.500M7.500 17h5" stroke="#f0782a" /></Ico>
          极客时间-轻松学习...
        </Mark>
        <Mark $w={193}>
          <Ico w={20} stroke="none"><ellipse cx="10" cy="10" rx="10" ry="7.500" fill="#050505" /><circle cx="10" cy="10" r="4.500" fill="none" stroke="#444" strokeWidth="1.300" /><circle cx="10" cy="9" r="1.500" fill="#555" /></Ico>
          GAMES101: 现代...
        </Mark>
        <Mark $w={347} $ls={0.35}>
          <Ico w={20} stroke="#f6b73c" sw={3}><path d="M5 17L13 4" /><path d="M12.500 4.800L14 2" stroke="#e65a6e" /><path d="M4 19l1-2.500" stroke="#ddd" strokeWidth="1.500" /></Ico>
          Linggle 10^12- La...
        </Mark>
        <Slot $w={24} $ml={3}><Txt $s={17}>»</Txt></Slot>
        <Slot $w={1} $ml={6}><MarkSep /></Slot>
        <Slot $w={18} $ml={13} $c="#c5c8cc">
          <Ico w={18} sw={1.700}><rect x="1" y="1" width="16" height="16" /><path d="M4.500 5.500h1.500M8 5.500h6M4.500 9h1.500M8 9h6M4.500 12.500h1.500M8 12.500h6" /></Ico>
        </Slot>
        <Slot $w={62} $ml={11}><Txt $s={15.300}>阅读清单</Txt></Slot>
      </BookmarkRow>

      <EditorHeader>
        <Slot><Ico w={12} h={18} sw={2.800}><path d="M9 1L1.500 9l7.500 8" /></Ico></Slot>
        <Slot $ml={13.5}><Ico w={20} h={19} sw={2.600}><path d="M0 1.500h20M0 9.500h20M0 17.500h20" /></Ico></Slot>
        <Slot $w={90} $ml={15.5} $mt={3} $j="flex-start" $c="#94a0ba"><Txt $s={16.2}>New project</Txt></Slot>
        <Slot $ml={451}>
          <Ico w={22} sw={2.500}><circle cx="4" cy="4" r="2.400" /><circle cx="17.500" cy="18" r="2.400" /><path d="M6.500 4c7 0 6 3 2.500 5s-2 4 3 4h3.500l2 2.500" /></Ico>
        </Slot>
        <Slot $ml={68}><Ico w={22} sw={2.600}><path d="M9 4.300H2.300v15.400h14V13M12 6h10M17 1v10" /></Ico></Slot>
        <Slot $ml={18}>
          <Ico w={20} stroke="none" fill="currentColor"><path d="M12.500 0l6 6-2 2-1 7L4 20l-2.500-.5L2 17 6 6.500l5-2.500z" /><path d="M3 19l7-8" stroke="#323d50" strokeWidth="1.400" /><circle cx="10.500" cy="10.500" r="2" fill="#323d50" /></Ico>
        </Slot>
        <Slot $ml={20}><Ico w={20} stroke="none" fill="currentColor"><path d="M1 19l1.500-6L12 3.500l4.500 4.500L7 17.500zM13.200 2.300L15 .5l4.500 4.500-1.800 1.800z" /></Ico></Slot>
        <Slot $ml={67.5}><Ico w={18} h={19} sw={2.700}><path d="M7 1L2 6l5 5M2.500 6h7.500c4 0 6 2.500 6 5.500S14 17 10 17H7" /></Ico></Slot>
        <Slot $ml={19.5} $dim><Ico w={18} h={19} sw={2.700}><path d="M11 1l5 5-5 5M15.500 6H8c-4 0-6 2.500-6 5.500S4 17 8 17h2" /></Ico></Slot>
        <Slot $ml={67.5} $dim><Ico w={21} sw={2.600}><path d="M3 0v21M18 0v21M0 3h21M0 18h21M7.500 7h5v5h-5zM13 9.500h2V15H9v-2.500" /></Ico></Slot>
        <Slot $ml={18.500} $dim><Ico w={22} sw={2.600}><path d="M3 0v16M0 3h15M12.500 0v7M0 13h6M9 9h11v10H9zM9 6.500v15M20 6.500v15M6.500 9h15M6.500 19h15" /></Ico></Slot>
        <Slot $ml={68.5}><Ico w={19} sw={2.400}><path d="M9 1.200h8.800v16.600H1.200V13M2 2l9.500 9.500M12.500 5v7.500H5M1.200 7V1.200H6" /></Ico></Slot>
        <Slot $ml={344}><Ico w={21} sw={2.800}><path d="M1.500 1.500h14v12.500h-14z" /><path d="M20 5v13.500H4" strokeWidth="1.800" /></Ico></Slot>
        <Slot $ml={18.5}>
          <Ico w={22} sw={2.500}><circle cx="11" cy="11" r="9.700" strokeDasharray="9 1.600 3.200 1.600" /><circle cx="11" cy="11" r="4.200" strokeWidth="3" /><path d="M4.500 4.500l3 3M14.500 14.500l3 3M17.500 4.500l-3 3M7.500 14.500l-3 3" strokeWidth="1.300" /></Ico>
        </Slot>
        <Slot $ml={31}><ZoomDot $bg="#1cb70c"><Ico w={10} sw={2.600}><path d="M0 5h10" /></Ico></ZoomDot></Slot>
        <Slot $w={40} $ml={17} $c="#94a0ba"><Txt $s={16.200}>37%</Txt></Slot>
        <Slot $ml={14}><ZoomDot $bg="#fbae17"><Ico w={10} sw={2.600}><path d="M0 5h10M5 0v10" /></Ico></ZoomDot></Slot>
        <Slot $ml={13}><Ico w={20} sw={2.800}><circle cx="3.500" cy="10" r="2.300" /><circle cx="15.500" cy="3.500" r="2.300" /><circle cx="15.500" cy="16.500" r="2.300" /><path d="M5.500 9l8-4.500M5.500 11l8 4.500" /></Ico></Slot>
        <Slot $ml={14}><Ico w={17} h={18} sw={2.600}><path d="M2 1.800v14.400L14 9z" /></Ico></Slot>
        <Slot $ml={13}><Ico w={19} sw={2.800}><path d="M1.400 6V1.400H6M13 1.400h4.600V6M17.600 13v4.600H13M6 17.600H1.400V13" /></Ico></Slot>
        <Slot $ml={14}><Ico w={21} sw={2.600}><rect x="1.300" y="1.300" width="18.400" height="18.400" /><path d="M14 5.500v10" strokeWidth="4" /></Ico></Slot>
      </EditorHeader>

      <Body>
        <LeftPanel>
          <SearchRow>
            <Ico w={18} sw={2.600} stroke="#94a0ba"><circle cx="8" cy="8" r="6.500" /><path d="M12.500 12.500l5 4.500" /></Ico>
            <Txt $s={16.2}>Search</Txt>
          </SearchRow>
          <GroupHead>
            <Slot $w={8} $c={C.mid}><Chevron w={9} sw={3.200} /></Slot>
            <Txt $s={16}>Common</Txt>
          </GroupHead>
          <Palette>
            {palette.map(([name, art]) => (
              <PaletteItem key={name}>
                <PaletteArt>{art}</PaletteArt>
                <PaletteLabel>{name}</PaletteLabel>
              </PaletteItem>
            ))}
          </Palette>
        </LeftPanel>

        <Workspace>
          <TopRuler>
            <RulerTicks width="1320" height="24" shapeRendering="crispEdges">
              {hTicks.map((t, i) => <rect key={i} x={Math.round(t.p)} y={t.major ? 0 : 19} width="1" height={t.major ? 24 : 5} fill={t.major ? "#46556f" : "#3d4c66"} />)}
              <rect x="24" y="0" width="1" height="24" fill="#3d4c66" />
            </RulerTicks>
            {hLabels.map((t) => <RulerLabel key={t}>{t}</RulerLabel>)}
          </TopRuler>
          <Middle>
            <SideRuler>
              <RulerTicks width="24" height="721" shapeRendering="crispEdges">
                {vTicks.map((t, i) => <rect key={i} x={t.major ? 0 : 19} y={Math.round(t.p)} width={t.major ? 24 : 5} height="1" fill={t.major ? "#46556f" : "#3d4c66"} />)}
              </RulerTicks>
              {vLabels.map((t, i) => <SideLabel key={t} $mt={i ? 0 : -63.5}>{t}</SideLabel>)}
            </SideRuler>
            <Canvas>
              <ToolBox>
                <Ico w={20} sw={2.500}><path d="M2.300 1v15.500H8M2.300 5H8M8 2h10.500v5.500H8zM8 12h10.500v5.500H8z" /></Ico>
                <Ico w={20} sw={2.600} stroke={C.blue}><path d="M10 1.300l8.700 4v9L10 18.700l-8.700-4.400v-9zM1.300 5.600L10 10l8.700-4.400M10 10v8.500" /></Ico>
                <Ico w={20} sw={2.300}><circle cx="10" cy="10" r="9" /><path d="M5.500 7.500h2.500M12 7.500h2.500" /><path d="M6.500 11.500h7c0 4-7 4-7 0z" fill="currentColor" stroke="none" /></Ico>
                <Ico w={20} sw={2.500}><path d="M10 1.500l8.500 5.200L10 12 1.500 6.700zM.8 12.500l9.200 5.700 9.200-5.700" /></Ico>
                <Ico w={20} sw={2.500}><rect x="2" y="2" width="16" height="15.500" /><path d="M6.500 8h7.500" strokeWidth="3.500" /></Ico>
              </ToolBox>
              <BoardTitle>
                <Ico w={17} h={18} sw={2.300}><path d="M0 9l8.500-8L17 9M3.500 7v9.800h10V7" /></Ico>
                <Slot $w={94} $mt={4} $j="flex-start"><Txt $s={14.900} $ls={0.05}>Main artboard</Txt></Slot>
              </BoardTitle>
              <Board>
                <Shape $x={141} $y={198} $w={745} $h={68} $bg="#fff" $bd="1px solid #8d99a3" />
                <BoardText $x={444.5} $y={209} $s={34.700} $lh={46}>Setting</BoardText>
                <Shape $x={16} $y={28} $w={126} $h={408} $bg="#fff" $bd="1px solid #999" />
                <Shape $x={19} $y={30} $w={120} $h={139} $bd="1px solid #bbb" />
                <Shape $x={19} $y={286} $w={120} $h={139} $bd="1px solid #bbb" />
                <Shape $x={21} $y={163} $w={120} $h={123} $bg="rgba(185, 236, 255, 0.82)" />
                <BoardText $x={21.5} $y={66.500} $s={17.700} $lh={27.300}>{"GPU\nINFORMATION"}</BoardText>
                <BoardText $x={20.5} $y={198.500} $s={17.700} $lh={27.300}>{"HISTORY\nINFORMATION"}</BoardText>
                <BoardText $x={15.5} $y={335.500} $s={17.700} $lh={28}>{"OVERLOCKING\nINFORMATION"}</BoardText>
                <BoardText $x={56} $y={96} $s={5.400} $lh={8} $c="#8f96b0">Double click to edit</BoardText>
                <BoardText $x={58} $y={228} $s={5.400} $lh={8} $c="#8f96b0">Double click to edit</BoardText>
                <BoardText $x={56} $y={351} $s={5.400} $lh={8} $c="#8f96b0">Double click to edit</BoardText>
                <Shape $x={34} $y={441} $w={89} $h={48} $bg="#fff" $r={19} $bd="1px solid #aaa" />
                <BoardText $x={68} $y={459} $s={6.800} $lh={8} $c="#888">Type something</BoardText>
                <BoardText $x={48} $y={450} $s={23} $lh={30} $c="#1c1c1c">Apply</BoardText>
                <BoardText $x={222} $y={80} $s={18} $lh={22} $b={600} $c="#ececec">Hashrate%</BoardText>
                <Overlay width="888" height="500" fill="none">
                  {gauges.map(([x, y]) => (
                    <g key={x} transform={`translate(${x} ${y})`}>
                      <circle r="70.500" stroke="#7e99a8" strokeWidth="3.800" />
                      <circle r="70.500" stroke="#eee" strokeWidth="2.800" />
                      <circle r="70.500" stroke={C.blue} strokeWidth="3" pathLength="100" strokeDasharray="66 34" transform="rotate(-90)" />
                    </g>
                  ))}
                  <path d="M222 296.500h579v143H464L367 467.500l-48-28h-97z" fill="#527388" stroke="#486a7c" />
                  <path d="M118.500 180c9 0 16 5 16 14 0 8-9 16-16 22-7-6-16-14-16-22 0-9 7-14 16-14z" fill={C.blue} />
                  <path d="M21.500 163.500h119v138h-119zM80.500 163v-20" stroke={C.blue} strokeWidth="1.300" />
                  <circle cx="80.500" cy="137.500" r="5.500" fill="#fff" stroke={C.blue} strokeWidth="1.200" />
                  <circle cx="140.500" cy="137.500" r="5.500" fill="#fff" stroke="#f5476b" strokeWidth="1.300" />
                  <circle cx="140.500" cy="137.500" r="2.600" fill="#ffc4cf" />
                  {handles.map(([x, y]) => <rect key={`${x}-${y}`} x={x - 4.500} y={y - 4.500} width="9" height="9" fill="#fff" stroke={C.blue} />)}
                </Overlay>
              </Board>
            </Canvas>
          </Middle>
          <StatusBar>
            <Slot $w={86} $j="flex-start" $c="#94a0ba"><Txt $s={16.2}>Project type</Txt></Slot>
            <Slot $w={75} $ml={15} $mt={1} $j="flex-start" $c="#fff"><Txt $s={16.2}>Web 1920</Txt></Slot>
            <Slot $w={16} $ml={7} $c={C.mid}><Chevron w={9} sw={3} /></Slot>
            <Slot $ml={1063} $mb={3} $c={C.mid}>
              <Ico w={20} sw={2}><circle cx="10" cy="10" r="8.800" /><path d="M14.500 5.500l-2.500 6.500-6.500 2.500L8 8z" strokeWidth="1.600" /></Ico>
            </Slot>
          </StatusBar>
        </Workspace>

        <RightPanel>
          <PanelScroll>
            <PanelTabs>
              <PanelTab $on><Txt $s={16}>Properties</Txt></PanelTab>
              <PanelTab><Slot $w={84} $ml={-1}><Txt $s={16.100}>Interactions</Txt></Slot></PanelTab>
            </PanelTabs>
            <Line $h={42} $pb={2} $border $full>
              <Slot $w={20} $c={C.mid}><Ico w={16}><path d="M1 0v15" strokeWidth="1" /><path d="M4 7.500h12" strokeWidth="4.500" /></Ico></Slot>
              <Slot $w={20} $ml={16} $c={C.mid}><Ico w={16}><path d="M8 0v15" strokeWidth="3.500" /><path d="M0 7.500h16" strokeWidth="4.500" /></Ico></Slot>
              <Slot $w={20} $ml={15.500} $c={C.mid}><Ico w={16}><path d="M15 0v15" strokeWidth="1" /><path d="M0 7.500h12" strokeWidth="4.500" /></Ico></Slot>
              <Slot $w={20} $ml={15.500} $c={C.mid}><Ico w={16}><path d="M0 .5h15.500" strokeWidth="1" /><path d="M8 4v11" strokeWidth="5" /></Ico></Slot>
              <Slot $w={20} $ml={15.500} $c={C.mid}><Ico w={16}><path d="M8 0v15" strokeWidth="5" /><path d="M0 7.500h16" strokeWidth="3.500" /></Ico></Slot>
              <Slot $w={20} $ml={15.500} $c={C.mid}><Ico w={16}><path d="M0 14.500h15.500" strokeWidth="1" /><path d="M8 0v11" strokeWidth="5" /></Ico></Slot>
              <Slot $w={20} $ml={15.500} $c={C.mid} $dim><Ico w={16}><path d="M1 0v15M15 0v15" strokeWidth="1.300" /><path d="M8 2v11" strokeWidth="5.500" /></Ico></Slot>
              <Slot $w={20} $ml={15.500} $c={C.mid} $dim><Ico w={16}><path d="M0 1h16M0 14h16" strokeWidth="1.300" /><path d="M3 7.500h10" strokeWidth="5" /></Ico></Slot>
            </Line>
            <Line $h={56} $pb={2} $border $full>
              <Slot $w={170} $mb={2} $j="flex-start" $c="#fff"><Txt $s={16.200}>Panel1 - copy 1</Txt></Slot>
              <Slot $w={20} $ml={2.500} $c={C.mid}><Ico w={20} h={18} sw={2.300}><ellipse cx="10" cy="9" rx="9" ry="8" /><circle cx="10" cy="9" r="3.700" fill="currentColor" stroke="none" /></Ico></Slot>
              <Slot $w={20} $ml={16.500} $c={C.mid}><Ico w={18} sw={2.300}><circle cx="9" cy="9" r="7.900" /><path d="M3.500 14.500l11-11" /></Ico></Slot>
              <Slot $w={20} $ml={16} $c={C.mid}><Ico w={16} h={18} sw={2.300}><rect y="8.500" width="16" height="9.500" fill="currentColor" stroke="none" /><path d="M4 9V5a4 4 0 0 1 8 0v1" /></Ico></Slot>
            </Line>
            <Line $h={54} $full>
              <Slot $w={26} $mb={2} $j="flex-start"><Txt $s={16}>W</Txt></Slot>
              <Slot $w={55} $j="flex-start" $c="#fff"><Txt $s={16}>259</Txt></Slot>
              <Slot $w={12}><Ico w={12} h={14} sw={1.300} stroke="#4a5670"><path d="M1 4.500h9.500V18" /></Ico></Slot>
              <Slot $w={20} $ml={26} $mb={2} $j="flex-start"><Txt $s={16}>X</Txt></Slot>
              <Slot $w={65} $j="flex-start" $c="#fff"><Txt $s={16}>47</Txt></Slot>
              <Slot $w={43} $j="flex-start" $c="#fff"><Txt $s={16}>0</Txt></Slot>
              <Slot $w={10} $mb={4} $j="flex-start"><Txt $s={16}>°</Txt></Slot>
            </Line>
            <Line $h={0} $full>
              <Slot $w={20} $ml={82} $mb={12} $c={C.mute}><Ico w={19} h={12} sw={2}><path d="M7.500 1H5.500a4.500 4.500 0 0 0 0 9h2M11.500 1h2a4.500 4.500 0 0 1 0 9h-2M5.500 5.500h8" /></Ico></Slot>
            </Line>
            <Line $h={30} $full>
              <Slot $w={26} $j="flex-start"><Txt $s={16}>H</Txt></Slot>
              <Slot $w={55} $j="flex-start" $c="#fff"><Txt $s={16}>300</Txt></Slot>
              <Slot $w={12}><Ico w={12} h={14} sw={1.300} stroke="#4a5670"><path d="M1 12.500h9.500V-1" /></Ico></Slot>
              <Slot $w={20} $ml={26} $j="flex-start"><Txt $s={16}>Y</Txt></Slot>
              <Slot $w={65} $j="flex-start" $c="#fff"><Txt $s={16}>351</Txt></Slot>
            </Line>
            <Line $h={16} />
            <Rule $r={15} />
            <Line $h={67}>
              <Txt $s={16.200}>Responsive layout</Txt><Grow /><Toggle $mt={-7} />
            </Line>
            <SectionHead $h={39}>
              <Txt $s={16}>Style</Txt><Grow /><Slot $w={22} $c={C.mid}><Chevron w={14} sw={2.400} /></Slot>
            </SectionHead>
            <Line $h={54} $pb={2}>
              <Slot $w={55} $mb={1} $j="flex-start"><Txt $s={16.100}>Opacity</Txt></Slot><Range><Knob /></Range>
              <Slot $w={27} $ml={13} $mt={1} $c="#fff"><Txt $s={16}>100</Txt></Slot>
              <Slot $w={14} $ml={8} $mt={2}><Txt $s={15}>%</Txt></Slot>
            </Line>
            <Rule />
            <Line $h={57}>
              <Box><Check /></Box><Slot $w={60} $mt={4} $j="flex-start"><Txt $s={16}>Fill</Txt></Slot><Grow />
              <Swatch $bg="repeating-conic-gradient(#acdcec 0 25%, #c7f0ff 0 50%) 0 0 / 12px 12px" />
            </Line>
            <Rule />
            <Line $h={57}>
              <Box><Check /></Box><Txt $s={16}>Border</Txt><Grow />
              <Swatch $bg="#7a7a7a" $bd="#b9b9c0" />
            </Line>
            <Line $h={24} $pb={2}>
              <Slot $w={51} $ml={30} $j="flex-start"><Txt $s={16}>Width</Txt></Slot>
              <Slot $w={10} $mt={1} $c="#fff"><Txt $s={16}>1</Txt></Slot>
            </Line>
            <Line $h={60} $full>
              <Slot $w={20} $ml={35} $c={C.mid}><Ico w={20} h={11} sw={2.600}><path d="M0 1.500h20" strokeDasharray="5 2.500" /><path d="M0 9.500h20" strokeDasharray="9 2.500" /></Ico></Slot>
              <Slot $w={48} $ml={20} $j="flex-start"><Txt $s={16}>Dash</Txt></Slot>
              <Slot $w={28} $j="flex-start" $c="#fff"><Txt $s={16}>0</Txt></Slot>
              <Slot $w={40} $j="flex-start" $c="#475066"><Txt $s={16}>Gap</Txt></Slot>
              <Slot $w={10} $c="#475066"><Txt $s={16}>0</Txt></Slot>
            </Line>
            <Line $h={28} $pb={2}>
              <Slot $w={90} $ml={30}>
                <Segments>
                  <Segment $on><Ico w={14} h={15} sw={3}><path d="M13 1.500H3.500v12H13M0 7.500h13" /></Ico></Segment>
                  <Segment><Ico w={15} h={18} sw={2.500}><path d="M15 1.500H9c-9 0-9 15 0 15h6M9 9h6" /><circle cx="8" cy="9" r="2.500" fill="currentColor" stroke="none" /></Ico></Segment>
                  <Segment><Ico w={14} h={16} sw={2.500}><path d="M14 1.500H1.500v13H14M7 8h7" /><circle cx="7" cy="8" r="2.300" fill="currentColor" stroke="none" /></Ico></Segment>
                </Segments>
              </Slot>
              <Slot $w={90} $ml={20}>
                <Segments>
                  <Segment $on><Ico w={14} h={14} sw={4}><path d="M2.500 0v11.500H14" /></Ico></Segment>
                  <Segment><Ico w={14} h={14} sw={3.600}><path d="M2.500 0v7c0 3 1.500 4.500 4.500 4.500h7" /></Ico></Segment>
                  <Segment><Ico w={14} h={14} sw={3.600}><path d="M2.500 0v7l4.500 4.500h7" /></Ico></Segment>
                </Segments>
              </Slot>
            </Line>
            <Line $h={22} />
            <Rule />
            <Line $h={52} $full>
              <Box />
              <Slot $w={62} $ml={2} $j="flex-start">
                <Segments $dim>
                  <Segment $on $dim><Ico w={16} sw={3.200}><rect x="1.600" y="1.600" width="12.800" height="12.800" rx="2" /></Ico></Segment>
                  <Segment $dim><Ico w={16} sw={2.600}><path d="M1.300 5.500v-1.500q0-2.700 2.700-2.700h1.500M10.500 1.300H12q2.700 0 2.700 2.700v1.500M14.700 10.500V12q0 2.700-2.700 2.700h-1.500M5.500 14.700H4q-2.700 0-2.700-2.700v-1.500" /></Ico></Segment>
                </Segments>
              </Slot>
              <RangeOff><Knob $dim /></RangeOff>
              <Slot $w={10} $ml={15} $c="#475066"><Txt $s={16}>0</Txt></Slot>
              <Slot $w={18} $ml={22} $mt={1} $c="#475066"><Txt $s={16}>px</Txt></Slot>
            </Line>
            <Line $h={42} $pb={11}>
              <Slot $w={120} $ml={30} $j="flex-start" $c="#475066"><Txt $s={16.200}>By percentage</Txt></Slot><Grow /><Toggle $dim $mt={0} />
            </Line>
            <Rule />
            <Line $h={57}>
              <Box /><Txt $s={16}>Shadow</Txt><Grow />
              <Swatch $bg="repeating-conic-gradient(#c9c9c9 0 25%, #e8e8e8 0 50%) 0 0 / 12px 12px" />
            </Line>
          </PanelScroll>
        </RightPanel>
      </Body>

      <Shelf>
        <ShelfItem $w={296} $pl={25}>
          <FileIcon c="#5a8def" t="JPG" /><ShelfName>0100b2554bf92a....jpg</ShelfName>
          <Slot $ml={9} $c="#d0d2d6"><Chevron w={15} sw={1.500} up /></Slot>
        </ShelfItem>
        <ShelfItem $w={291} $pl={20}>
          <FileIcon c="#46a7f0" t="GIF" /><ShelfName>images_gif01.gif</ShelfName>
          <Slot $ml={9} $c="#d0d2d6"><Chevron w={15} sw={1.500} up /></Slot>
        </ShelfItem>
        <ShelfItem $w={292} $pl={21}>
          <FileIcon c="#8db36b" t="PNG" /><ShelfName>linux_pc_free.png</ShelfName>
          <Slot $ml={9} $c="#d0d2d6"><Chevron w={15} sw={1.500} up /></Slot>
        </ShelfItem>
        <ShelfItem $w={291} $pl={20}>
          <FileIcon c="#5a8def" t="JPG" /><ShelfName>e912fea95e583f....jpg</ShelfName>
          <Slot $ml={9} $c="#d0d2d6"><Chevron w={15} sw={1.500} up /></Slot>
        </ShelfItem>
        <ShowAll>全部显示</ShowAll>
        <Slot $ml={11} $w={35} $j="flex-start" $c="#d5d7da"><Slot><Ico w={12} sw={2.200}><path d="M1 1l10 10M11 1L1 11" /></Ico></Slot></Slot>
      </Shelf>

      <BirdBadge><Bird /></BirdBadge>
    </Screen>
  );
}
